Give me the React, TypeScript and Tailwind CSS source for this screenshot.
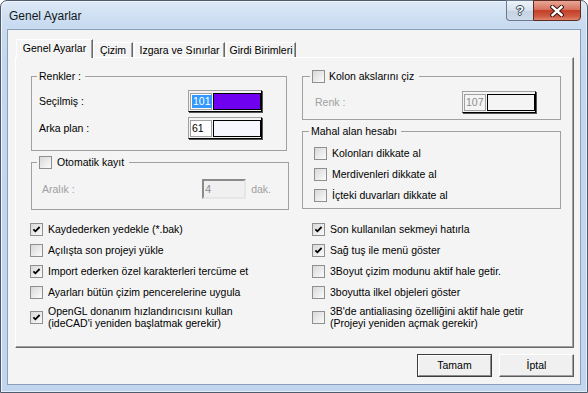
import type { ReactNode } from "react";

function Check({ on }: { on?: boolean }) {
  return (
    <span className="flex h-[13px] w-[13px] shrink-0 items-center justify-center border border-[#8e8f8f] bg-[linear-gradient(135deg,#d8d8d8,#fbfbfb)]">
      {on && (
        <svg width="9" height="9" viewBox="0 0 9 9">
          <polyline points="1.4,4.3 3.4,6.3 7.6,2" fill="none" stroke="#000" strokeWidth="1.8" />
        </svg>
      )}
    </span>
  );
}

function Opt({ on, children, tall }: { on?: boolean; children: ReactNode; tall?: boolean }) {
  return (
    <div className={tall ? "flex h-[28px] items-center gap-[5px]" : "flex h-[21px] items-center gap-[5px]"}>
      <Check on={on} />
      <span className={tall ? "leading-[12px]" : ""}>{children}</span>
    </div>
  );
}

function ColorBox({ value, swatch, selected, disabled }: { value: string; swatch: string; selected?: boolean; disabled?: boolean }) {
  return (
    <div className="flex h-[22px] w-[74px] items-center gap-[1px] border border-t-[#a0a0a0] border-l-[#a0a0a0] border-r-black border-b-black pl-[1px] shadow-[1px_1px_0_#555]">
      <div className={`flex h-[17px] w-[22px] items-center border border-[#a0a0a0] pl-[1px] ${disabled ? "bg-[#f4f4f4] text-[#8d8d8d]" : "bg-white"}`}>
        {selected ? (
          <>
            <span className="bg-[#3399ff] px-[1px] text-white">{value}</span>
            <span className="h-[12px] w-[1px] bg-[#e07020]" />
          </>
        ) : (
          <span>{value}</span>
        )}
      </div>
      <div className={`h-[17px] flex-1 border border-black ${swatch}`} />
    </div>
  );
}

function Tab({ children, w }: { children: ReactNode; w: string }) {
  return (
    <div className={`flex h-[15px] items-center justify-center border-t border-l border-t-white border-l-white border-r border-r-[#696969] shadow-[inset_-1px_0_0_#a0a0a0] ${w}`}>
      {children}
    </div>
  );
}

export default function App() {
  return (
    <div className="h-[393px] w-[588px] bg-white font-['Liberation_Sans',Arial,sans-serif] text-[10.5px] leading-[13px] text-black">
      <div className="flex h-full flex-col rounded-t-[7px] border border-[#4d5b6c] bg-[linear-gradient(180deg,#dde9f6_0px,#cadcf1_22px,#c3d7ee_60px,#c1d6ee_100%)] shadow-[inset_1px_1px_0_#eef5fc,inset_-1px_-1px_0_#e4eef9]">
        {/* title bar */}
        <div className="flex h-[28px] shrink-0 items-start">
          <span className="ml-[8px] mt-[7px] text-[12px] leading-[16px] text-[#101820]">Genel Ayarlar</span>
          <div className="ml-auto mr-[6px] mt-[-1px] flex">
            <div className="flex h-[21px] w-[27px] items-center justify-center rounded-bl-[4px] border border-r-0 border-[#6b7a8c] bg-[linear-gradient(180deg,#eef3f9,#d6e1ee_50%,#c4d2e3_51%,#cfdbea)]">
              <span className="text-[13px] font-bold leading-[14px] text-white [text-shadow:0_0_1px_#2d3a4a,1px_0_0_#3b4858,-1px_0_0_#3b4858,0_1px_0_#3b4858,0_-1px_0_#3b4858]">?</span>
            </div>
            <div className="flex h-[21px] w-[48px] items-center justify-center rounded-br-[4px] border border-[#5d2b22] bg-[linear-gradient(180deg,#e8a796,#d7735f_45%,#c5402a_50%,#cd5a41_80%,#e0866c)]">
              <svg width="14" height="12" viewBox="0 0 14 12">
                <path d="M2.5 2 L11.5 10 M11.5 2 L2.5 10" stroke="#3a1510" strokeWidth="4.4" strokeLinecap="square" />
                <path d="M2.5 2 L11.5 10 M11.5 2 L2.5 10" stroke="#fff" strokeWidth="2.4" strokeLinecap="square" />
              </svg>
            </div>
          </div>
        </div>

        {/* client area */}
        <div className="mx-[6px] mb-[7px] flex flex-1 flex-col border border-[#8ba0b8] bg-[#f4f4f4]">
          {/* tabs */}
          <div className="ml-[8px] mt-[8px] flex h-[19px] items-end">
            <div className="relative top-[1px] z-10 flex h-[19px] w-[77px] items-start justify-center border-t border-l border-t-white border-l-white border-r border-r-[#696969] bg-[#f4f4f4] pt-[2px] shadow-[inset_-1px_0_0_#a0a0a0]">
              Genel Ayarlar
            </div>
            <Tab w="w-[40px]">Çizim</Tab>
            <div className="ml-[1px]" />
            <Tab w="w-[91px]">Izgara ve Sınırlar</Tab>
            <div className="ml-[1px]" />
            <Tab w="w-[70px]">Girdi Birimleri</Tab>
          </div>

          {/* panel */}
          <div className="ml-[7px] flex h-[291px] w-[559px] flex-col border border-t-white border-l-white border-r-[#696969] border-b-[#696969] shadow-[inset_-1px_-1px_0_#a0a0a0]">
            <div className="ml-[15px] mt-[12px] flex gap-[13px]">
              {/* left column */}
              <div className="flex flex-col">
                <fieldset className="w-[256px] border border-[#a0a0a0] pb-[11px] pl-[7px] pr-[24px] pt-[7px]">
                  <legend className="ml-[-2px] px-[2px] pr-[4px] leading-[13px]">Renkler :</legend>
                  <div className="flex h-[22px] items-center justify-between">
                    <span>Seçilmiş :</span>
                    <ColorBox value="101" swatch="bg-[#7000f0]" selected />
                  </div>
                  <div className="mt-[5px] flex h-[22px] items-center justify-between">
                    <span>Arka plan :</span>
                    <ColorBox value="61" swatch="bg-[#f6f6ff]" />
                  </div>
                </fieldset>
                <fieldset className="mt-[5px] w-[258px] border border-[#a0a0a0] pb-[10px] pl-[10px] pr-[17px] pt-[10px]">
                  <legend className="ml-[-5px] flex items-center gap-[5px] px-[2px] pr-[5px] leading-[13px]">
                    <Check />
                    <span>Otomatik kayıt</span>
                  </legend>
                  <div className="flex h-[20px] items-center text-[#a0a0a0]">
                    <span>Aralık :</span>
                    <div className="ml-auto flex h-[20px] w-[44px] items-center border-2 border-t-[#8a8a8a] border-l-[#8a8a8a] border-r-[#e6e6e6] border-b-[#e6e6e6] bg-[#f0f0f0] pl-[1px] text-[#8a8a8a]">
                      4
                    </div>
                    <span className="ml-[5px]">dak.</span>
                  </div>
                </fieldset>
              </div>

              {/* right column */}
              <div className="flex flex-col">
                <fieldset className="w-[259px] border border-[#a0a0a0] pb-[6px] pl-[12px] pr-[24px] pt-[8px]">
                  <legend className="ml-[-5px] flex items-center gap-[4px] px-[2px] pr-[5px] leading-[13px]">
                    <Check />
                    <span>Kolon akslarını çiz</span>
                  </legend>
                  <div className="flex h-[22px] items-center justify-between">
                    <span className="text-[#a0a0a0]">Renk :</span>
                    <ColorBox value="107" swatch="bg-[#f4f4f4]" disabled />
                  </div>
                </fieldset>
                <fieldset className="mt-[5px] w-[259px] border border-[#a0a0a0] pb-[2px] pl-[11px] pt-[5px]">
                  <legend className="ml-[-5px] px-[2px] pr-[4px] leading-[13px]">Mahal alan hesabı</legend>
                  <Opt>Kolonları dikkate al</Opt>
                  <Opt>Merdivenleri dikkate al</Opt>
                  <Opt>İçteki duvarları dikkate al</Opt>
                </fieldset>
              </div>
            </div>

            {/* option list */}
            <div className="ml-[14px] mt-[9px] grid grid-cols-[282px_1fr]">
              <div className="flex flex-col">
                <Opt on>Kaydederken yedekle (*.bak)</Opt>
                <Opt>Açılışta son projeyi yükle</Opt>
                <Opt on>Import ederken özel karakterleri tercüme et</Opt>
                <Opt>Ayarları bütün çizim pencerelerine uygula</Opt>
                <Opt on tall>
                  OpenGL donanım hızlandırıcısını kullan
                  <br />
                  (ideCAD'i yeniden başlatmak gerekir)
                </Opt>
              </div>
              <div className="flex flex-col">
                <Opt on>Son kullanılan sekmeyi hatırla</Opt>
                <Opt on>Sağ tuş ile menü göster</Opt>
                <Opt>3Boyut çizim modunu aktif hale getir.</Opt>
                <Opt>3boyutta ilkel objeleri göster</Opt>
                <Opt tall>
                  3B'de antialiasing özelliğini aktif hale getir
                  <br />
                  (Projeyi yeniden açmak gerekir)
                </Opt>
              </div>
            </div>
          </div>

          {/* buttons */}
          <div className="mr-[6px] mt-[6px] flex justify-end gap-[7px]">
            <button className="h-[23px] w-[75px] border border-[#3c3c3c] bg-[#f0f0f0] p-0">
              <span className="flex h-full w-full items-center justify-center border border-t-white border-l-white border-r-[#8a8a8a] border-b-[#8a8a8a]">
                Tamam
              </span>
            </button>
            <button className="flex h-[23px] w-[75px] items-center justify-center border border-t-white border-l-white border-r-[#5a5a5a] border-b-[#5a5a5a] bg-[#f0f0f0] shadow-[inset_-1px_-1px_0_#a0a0a0]">
              İptal
            </button>
          </div>
        </div>
      </div>
    </div>
  );
}
